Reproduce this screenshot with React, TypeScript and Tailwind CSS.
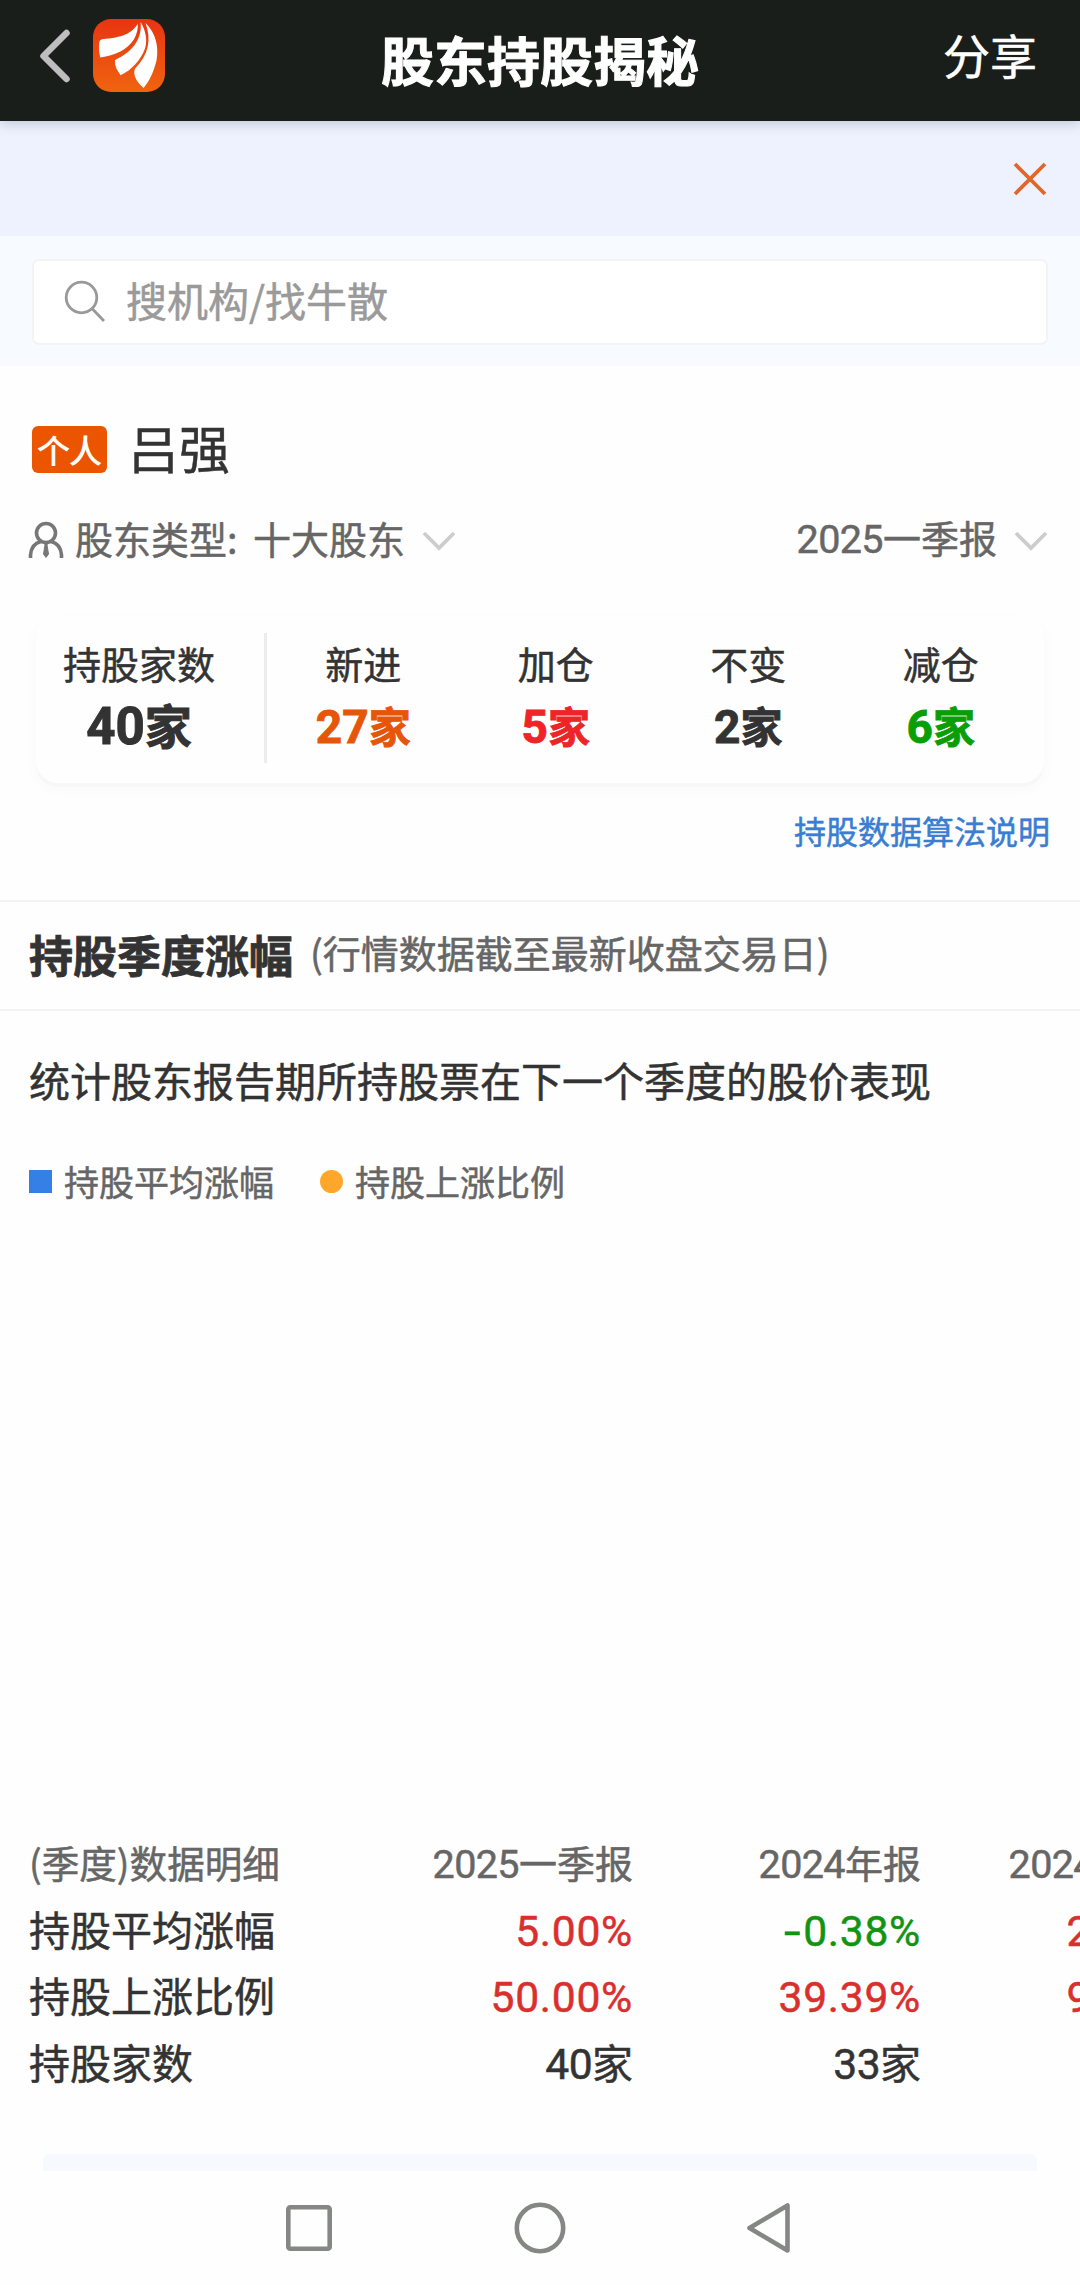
import React from "react";

function Num({ children, className = "" }: { children: React.ReactNode; className?: string }) {
  return <span className={`font-[Roboto] text-[1.04em] ${className}`}>{children}</span>;
}

function ChevronDown() {
  return (
    <svg width="34" height="22" viewBox="0 0 34 22" fill="none" stroke="#cdcdcd" strokeWidth="3.8">
      <path d="M2 3 L17 18 L32 3" />
    </svg>
  );
}

function Header() {
  return (
    <header className="relative z-10 flex h-[121px] items-start bg-[#1a1e1b] text-white shadow-[0_2px_12px_rgba(40,60,90,0.25)]">
      <svg className="mt-[28px] ml-[38px]" width="36" height="56" viewBox="0 0 36 56" fill="none" stroke="#bebec0" strokeWidth="6.5" strokeLinecap="round" strokeLinejoin="round">
        <path d="M28.5 5 L5.5 28 L28.5 51" />
      </svg>
      <svg className="mt-[19px] ml-[19px]" width="72" height="73" viewBox="0 0 72 72" preserveAspectRatio="none">
        <defs>
          <linearGradient id="logoFill" x1="0" y1="0" x2="0" y2="1">
            <stop offset="0" stopColor="#e83412" />
            <stop offset="1" stopColor="#f0640f" />
          </linearGradient>
        </defs>
        <rect width="72" height="72" rx="18" fill="url(#logoFill)" />
        <g fill="#fff">
          <path d="M45 4.5 C38 15 30 18 9 20 Q6.5 20.5 6.3 23 C5.8 28 6 33 7.3 38 C22 36 35 30 41 20 C44 15 45 9 45 4.5Z" />
          <path d="M47.5 3 C49.5 18 41 32 22 40.5 Q21.3 44 23.5 49 L27.5 55.5 C39 50 48 40 52 29 C55 20 52 10 47.5 3Z" />
          <path d="M52.5 4 C58.5 20 56 35 42 49 Q40.5 52 42 57 C44 62 47 65 50.5 68 C57 61 61 51 63.5 41 C66 28 63 14 52.5 4Z" />
        </g>
      </svg>
      <h1 className="mt-[22px] ml-[216px] text-[53px] leading-[74px] font-bold [-webkit-text-stroke:1px]">股东持股揭秘</h1>
      <span className="mt-[22px] mr-[43px] ml-auto text-[47px] leading-[64px]">分享</span>
    </header>
  );
}

const stats = [
  { label: "新进", value: "27", color: "text-[#e65608]" },
  { label: "加仓", value: "5", color: "text-[#ee2428]" },
  { label: "不变", value: "2", color: "text-[#333333]" },
  { label: "减仓", value: "6", color: "text-[#0a9e06]" },
];

function Stats() {
  return (
    <section className="mx-[36px] mt-[51px] flex h-[167px] rounded-[22px] bg-[#fefefe] shadow-[0_4px_1px_#f7f7f8,0_6px_14px_2px_rgba(140,60,150,0.02)]">
      <div className="flex w-[206px] flex-col items-center pt-[28px] text-[#333333]">
        <span className="text-[38px] leading-[38px]">持股家数</span>
        <span className="mt-[19px] text-[47px] leading-[46px] font-bold [-webkit-text-stroke:1px]">
          <Num className="!text-[51px]">40</Num>家
        </span>
      </div>
      <div className="mt-[17px] ml-[22px] h-[130px] w-[3px] bg-[#ececec]" />
      <div className="grid w-[770px] grid-cols-4 pt-[28px]">
        {stats.map((s) => (
          <div key={s.label} className="flex flex-col items-center">
            <span className="text-[38px] leading-[38px] text-[#333333]">{s.label}</span>
            <span className={`mt-[20px] text-[42px] leading-[46px] font-bold [-webkit-text-stroke:0.9px] ${s.color}`}>
              <Num className="!text-[46px]">{s.value}</Num>家
            </span>
          </div>
        ))}
      </div>
    </section>
  );
}

const columns = [
  { year: "2025", rest: "一季报", avg: "5.00%", up: "50.00%", count: "40", down: false },
  { year: "2024", rest: "年报", avg: "0.38%", up: "39.39%", count: "33", down: true },
  { year: "2024", rest: "三季报", avg: "20.00%", up: "90.00%", count: "30", down: false },
];

function Table() {
  return (
    <section className="mt-[621px] flex w-[1209px] text-[41px] text-[#333333]">
      <div className="ml-[29px] w-[316px]">
        <div className="h-[66px] text-[37.6px] leading-[60px] text-[#666666]">(季度)数据明细</div>
        <div className="h-[66px] leading-[60px]">持股平均涨幅</div>
        <div className="h-[67px] leading-[60px]">持股上涨比例</div>
        <div className="h-[66px] leading-[60px]">持股家数</div>
      </div>
      {columns.map((c) => (
        <div key={c.year + c.rest} className="w-[288px] shrink-0 text-right">
          <div className="h-[66px] text-[38px] leading-[60px] text-[#666666]">
            <Num className="tracking-[-0.6px]">{c.year}</Num>{c.rest}
          </div>
          <div className={`h-[66px] leading-[60px] ${c.down ? "text-[#129412]" : "text-[#d9302e]"}`}>
            <Num className="tracking-[0.7px]">
              {c.down && <span className="mr-[2px] inline-block origin-right scale-x-140">-</span>}
              {c.avg}
            </Num>
          </div>
          <div className="h-[67px] leading-[60px] text-[#d9302e]"><Num className="tracking-[0.7px]">{c.up}</Num></div>
          <div className="h-[66px] leading-[60px]"><Num className="tracking-[-0.6px]">{c.count}</Num>家</div>
        </div>
      ))}
    </section>
  );
}

export default function App() {
  return (
    <div className="flex h-[2285px] w-[1080px] flex-col overflow-hidden bg-[#fefefe] font-['Noto_Sans_CJK_SC',sans-serif] whitespace-nowrap text-[#333333] [-webkit-text-stroke:0.5px]">
      <Header />
      <div className="flex h-[115px] items-start justify-end bg-[#eef2fe] pt-[41px] pr-[33px]">
        <svg width="34" height="34" viewBox="0 0 34 34" fill="none" stroke="#e0662a" strokeWidth="3.8">
          <path d="M2 2 L32 32 M32 2 L2 32" />
        </svg>
      </div>
      <div className="h-[130px] bg-[#f7faff] px-[32px] pt-[23px]">
        <div className="flex h-[86px] items-start rounded-[7px] border-2 border-[#f3f3f4] bg-white">
          <svg className="mt-[19px] ml-[30px]" width="42" height="44" viewBox="0 0 42 44" fill="none" stroke="#999999" strokeWidth="2.8">
            <circle cx="17.5" cy="17.5" r="15.3" />
            <path d="M28 28.5 L40 41" />
          </svg>
          <span className="ml-[20px] text-[41px] leading-[76px] text-[#9a9a9a]">搜机构/找牛散</span>
        </div>
      </div>

      <div className="mt-[60px] flex h-[47px] items-start pl-[32px]">
        <span className="h-[47px] w-[75px] rounded-[6px] bg-[#ec5500] text-center text-[32px] leading-[46px] text-white [-webkit-text-stroke:0.9px]">个人</span>
        <span className="ml-[21px] text-[51px] leading-[42px]">吕强</span>
      </div>

      <div className="mt-[38px] flex h-[54px] items-center pr-[32px] pl-[28px] text-[38px] leading-[54px] text-[#666666]">
        <svg className="mt-[4px]" width="36" height="38" viewBox="0 0 36 38" fill="none" stroke="#777777" strokeWidth="3.6">
          <circle cx="18" cy="12" r="9.5" />
          <path d="M2.5 37 V34 C3 27 7 22 13 20.5 M33.5 37 V34 C33 27 29 22 23 20.5" />
          <path d="M16 21 H20 L19 24 L20.5 33 L18 36.5 L15.5 33 L17 24Z" fill="#777777" stroke="#777777" strokeWidth="1" />
        </svg>
        <span className="ml-[11px] w-[178px]">股东类型:</span>
        <span>十大股东</span>
        <span className="mt-[5px] ml-[17px]"><ChevronDown /></span>
        <span className="mt-px mr-[17px] ml-auto"><Num className="tracking-[-0.6px]">2025</Num>一季报</span>
        <span className="mt-[5px]"><ChevronDown /></span>
      </div>

      <Stats />
      <div className="mt-[22px] self-end pr-[30px] text-[32px] leading-[50px] text-[#3a7dd2]">持股数据算法说明</div>

      <div className="mt-[45px] flex h-[111px] items-start border-y-2 border-[#f3f3f3] pt-[22px] pl-[29px]">
        <h2 className="text-[44px] leading-[60px] font-bold [-webkit-text-stroke:0.8px]">持股季度涨幅</h2>
        <span className="ml-[17px] text-[38px] leading-[55px] text-[#666666]">(行情数据截至最新收盘交易日)</span>
      </div>

      <p className="mt-[38px] pl-[29px] text-[41px] leading-[60px]">统计股东报告期所持股票在下一个季度的股价表现</p>
      <div className="mt-[42px] flex h-[60px] items-center pl-[29px] text-[35px] leading-[60px] text-[#666666]">
        <span className="mt-px size-[23px] bg-[#3480e6]" />
        <span className="ml-[12px]">持股平均涨幅</span>
        <span className="mt-px ml-[46px] size-[23px] rounded-full bg-[#ffa62b]" />
        <span className="ml-[12px]">持股上涨比例</span>
      </div>

      <Table />

      <div className="mx-[43px] mt-auto h-[17px] shrink-0 rounded-t-[6px] bg-[#f6faff]" />
      <nav className="flex h-[114px] shrink-0 pt-[30px]">
        <svg className="ml-[284px]" width="50" height="54" viewBox="0 0 50 54" fill="none" stroke="#858784" strokeWidth="4.6">
          <rect x="4.3" y="6.3" width="41.4" height="41.4" rx="2" />
        </svg>
        <svg className="ml-[179px]" width="54" height="54" viewBox="0 0 54 54" fill="none" stroke="#858784" strokeWidth="4.6">
          <circle cx="27" cy="27" r="23.2" />
        </svg>
        <svg className="ml-[178px]" width="48" height="54" viewBox="0 0 48 54" fill="none" stroke="#858784" strokeWidth="4.6" strokeLinejoin="round">
          <path d="M42.5 4.5 V49.5 L4.5 27Z" />
        </svg>
      </nav>
    </div>
  );
}
